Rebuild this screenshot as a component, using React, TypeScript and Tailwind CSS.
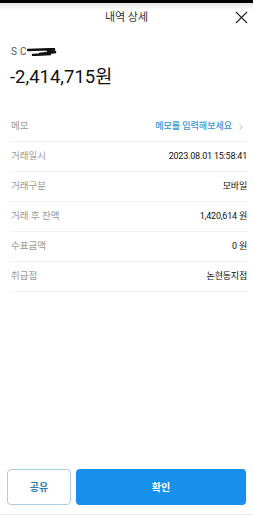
import { X, ChevronRight } from "lucide-react";

const rows: { label: string; value: string; memo?: boolean }[] = [
  { label: "메모", value: "메모를 입력해보세요", memo: true },
  { label: "거래일시", value: "2023.08.01 15:58:41" },
  { label: "거래구분", value: "모바일" },
  { label: "거래 후 잔액", value: "1,420,614 원" },
  { label: "수표금액", value: "0 원" },
  { label: "취급점", value: "논현동지점" },
];

export default function App() {
  return (
    <div
      className="flex h-[516px] w-[253px] flex-col overflow-hidden bg-white"
      style={{ fontFamily: "Roboto, 'Noto Sans CJK KR', sans-serif" }}
    >
      <div className="h-[3px] bg-black" />
      <div className="h-[7px] bg-gradient-to-b from-[#e4e4e4] to-white" />

      <header className="relative flex h-[16px] items-center justify-center">
        <span className="text-[11px] leading-[16px] text-[#333]">내역 상세</span>
        <X className="absolute right-[1px] top-[-3px] h-[21px] w-[21px] text-[#222]" strokeWidth={1.3} />
      </header>

      <section className="px-[11px] pt-[19px]">
        <div className="flex h-[14px] items-center">
          <span className="text-[10px] leading-[14px] tracking-[3px] text-[#555]">SC</span>
          <svg width="30" height="8" viewBox="0 0 30 8" className="-ml-[2px]">
            <path d="M1 2 L28 1 L20 3 L29 4 L12 6 L24 6 L6 7" stroke="#111" strokeWidth="2.4" fill="none" strokeLinecap="round" />
          </svg>
        </div>
        <div className="-ml-[1px] mt-[6px] text-[18.5px] leading-[24px] text-[#111]">-2,414,715원</div>
      </section>

      <ul className="ml-[10px] mr-[6px] mt-[23px]">
        {rows.map((r) => (
          <li
            key={r.label}
            className="flex h-[30px] items-center justify-between border-b border-[#f1f1f1] pl-[1px]"
          >
            <span className="text-[9.5px] text-[#9a9a9a]">{r.label}</span>
            {r.memo ? (
              <span className="flex items-center text-[9px] font-medium text-[#3596d8]">
                {r.value}
                <ChevronRight className="ml-[4px] mr-[1px] h-[10px] w-[10px] text-[#999]" strokeWidth={1.5} />
              </span>
            ) : (
              <span className="text-[9px] tracking-[-0.2px] text-[#111]">{r.value}</span>
            )}
          </li>
        ))}
      </ul>

      <div className="flex-1" />

      <footer className="flex gap-[5px] px-[7px] pb-[9px]">
        <button className="h-[36px] w-[64px] rounded-[4px] border border-[#a9cde3] bg-white text-[10px] font-bold text-[#2d7fb8]">
          공유
        </button>
        <button className="h-[36px] flex-1 rounded-[4px] bg-[#1690ea] text-[10px] font-bold text-white">
          확인
        </button>
      </footer>
      <div className="h-[1px] bg-[#eeeeee]" />
      <div className="h-[1px]" />
    </div>
  );
}
